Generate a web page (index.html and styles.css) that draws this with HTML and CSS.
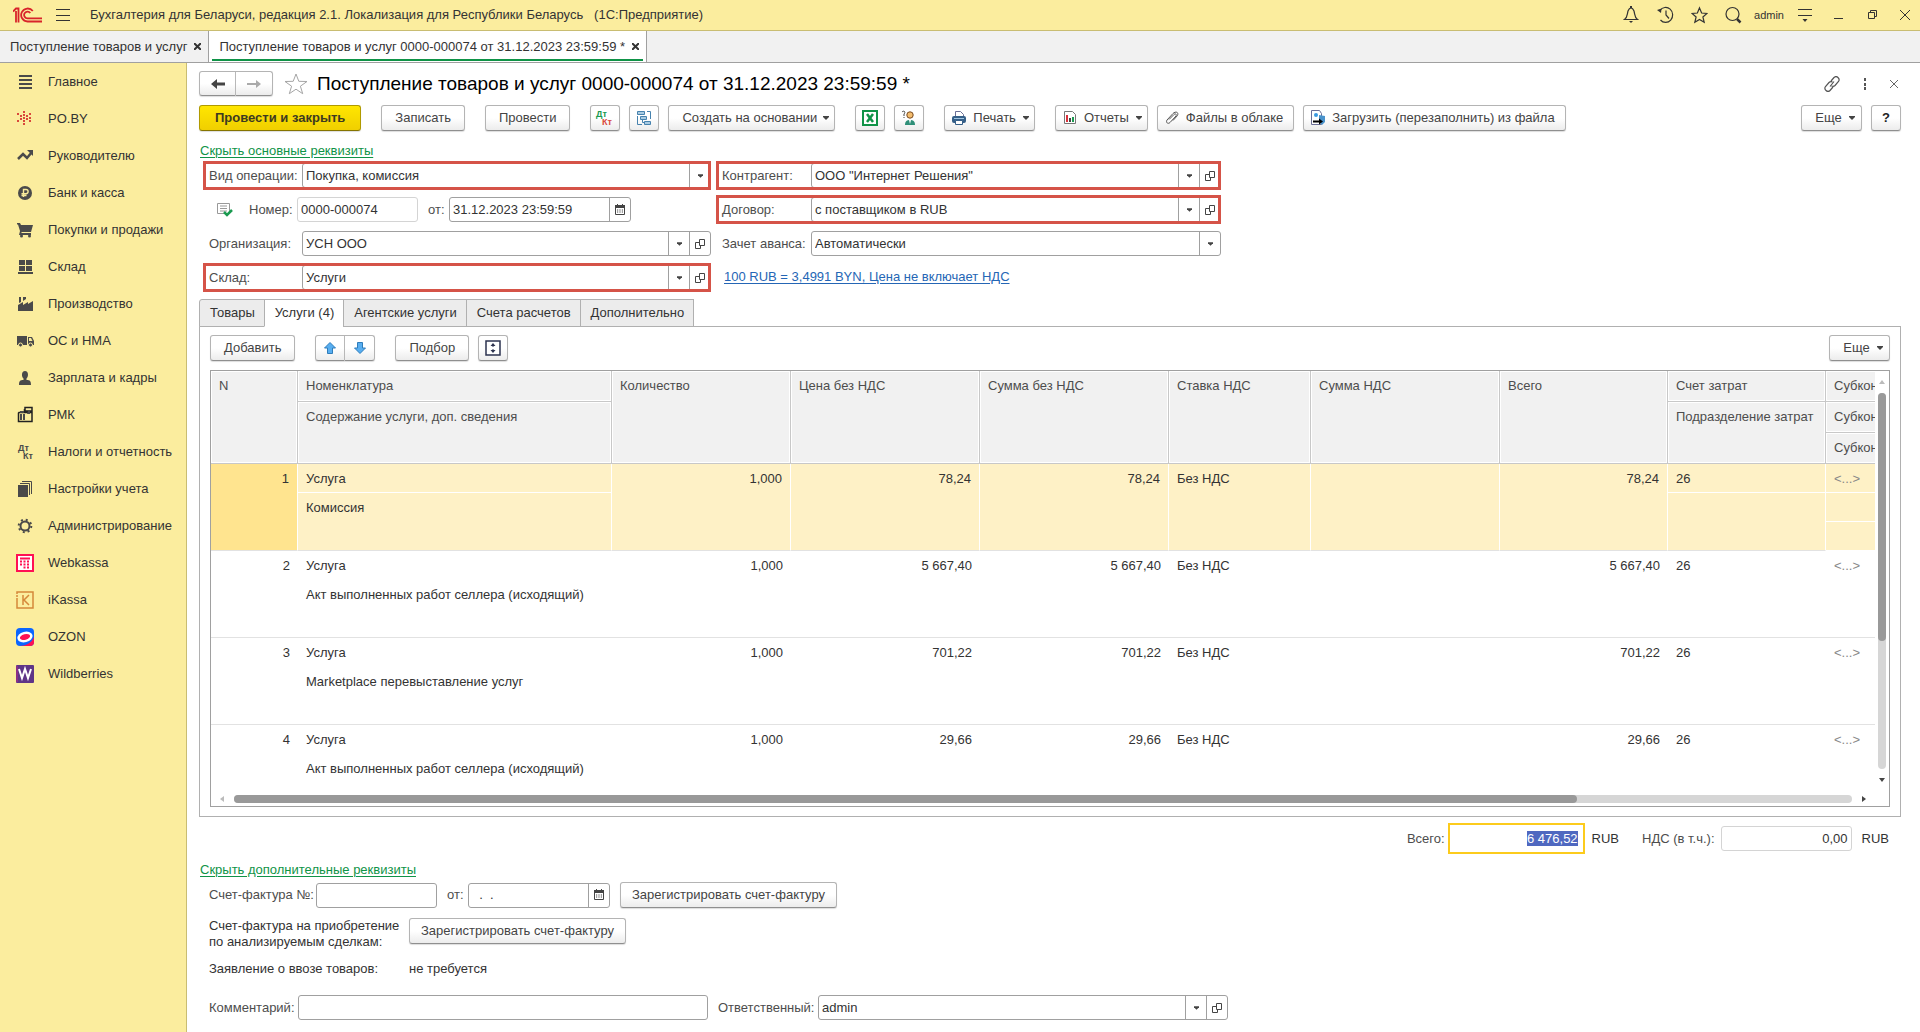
FILE: index.html
```html
<!DOCTYPE html>
<html lang="ru">
<head>
<meta charset="utf-8">
<title>Бухгалтерия для Беларуси</title>
<link rel="stylesheet" href="styles.css">
</head>
<body>
<svg class="defs" aria-hidden="true">
  <symbol id="i-open" viewBox="0 0 10 10"><path d="M4.500.5h5v6h-5zM4.500 3.500h-4v6h5v-3" fill="none" stroke="#444"/></symbol>
  <symbol id="i-down" viewBox="0 0 6 4"><path d="M0 0h6v1L3 4 0 1z" fill="#444"/></symbol>
  <symbol id="i-cal" viewBox="0 0 10 12"><path d="M.5 2.500h9v8h-9z" fill="none" stroke="#444"/><path d="M0 1h10v3H0zM2 0h1v2H2zM7 0h1v2H7z" fill="#444"/><path d="M2 6h6M2 8h6" stroke="#444" stroke-dasharray="1.200 1.200"/></symbol>
</svg>
<header class="topbar">
  <svg class="logo" width="29" height="17" viewBox="0 0 29 17" fill="none" stroke="#d8232a" stroke-width="1.800"><path d="M0 4.500l3-3h2.500v14M3 4v11.500M19.800 4A6.500 6.500 0 1 0 14.500 14.500H29M17.300 6A3.400 3.400 0 1 0 14.500 11.400H29"/></svg>
  <button class="icon-btn" aria-label="Меню"><svg width="14" height="14" viewBox="0 0 14 14"><path d="M0 1.500h14M0 7.500h14M0 12.500h14" stroke="#333"/></svg></button>
  <span class="app-name">Бухгалтерия для Беларуси, редакция 2.1. Локализация для Республики Беларусь &nbsp; (1С:Предприятие)</span>
  <nav class="top-tools">
    <button class="icon-btn" aria-label="Уведомления"><svg width="16" height="18" viewBox="0 0 16 18"><path d="M1.500 13.500h13c-3-2-2.500-5-3.500-8.500C10 2.500 9 2 8 2s-2 .5-3 3c-1 3.500-.5 6.500-3.500 8.500z" fill="none" stroke="#333" stroke-width="1.200"/><path d="M6 15h4l-2 2zM7 0h2v2H7z" fill="#333"/></svg></button>
    <button class="icon-btn" aria-label="История"><svg width="17" height="18" viewBox="0 0 17 18" fill="none" stroke="#333" stroke-width="1.200"><path d="M3 4.500A7 7.500 0 1 1 3.500 14M9 4.500V9l3 3.500"/><path d="M0 4l4 3 .5-4.500z" fill="#333" stroke="none"/></svg></button>
    <button class="icon-btn" aria-label="Избранное"><svg width="17" height="18" viewBox="0 0 24 24"><path d="M12 2l3 7.200 7.500.6-5.700 5 1.800 7.500L12 18.300l-6.600 4 1.800-7.500-5.700-5 7.500-.6z" fill="none" stroke="#333" stroke-width="1.700"/></svg></button>
    <button class="icon-btn" aria-label="Поиск"><svg width="17" height="18" viewBox="0 0 17 18"><circle cx="7.500" cy="8" r="6.500" fill="none" stroke="#333" stroke-width="1.200"/><path d="M12 13l3.500 3.500" stroke="#333" stroke-width="2.500"/></svg></button>
    <span class="user">admin</span>
    <button class="icon-btn" aria-label="Настройки"><svg width="14" height="14" viewBox="0 0 14 14"><path d="M0 1.500h14M0 7.500h14" stroke="#333"/><path d="M4.500 11h5L7 14z" fill="#333"/></svg></button>
    <button class="icon-btn" aria-label="Свернуть"><svg width="10" height="10" viewBox="0 0 10 10"><path d="M0 8.500h9" stroke="#333"/></svg></button>
    <button class="icon-btn" aria-label="Восстановить"><svg width="10" height="10" viewBox="0 0 10 10"><path d="M.5 2.500h6v6h-6zM2.500 2.500v-2h6v6h-2" fill="none" stroke="#333"/></svg></button>
    <button class="icon-btn close" aria-label="Закрыть"><svg width="10" height="10" viewBox="0 0 10 10"><path d="M0 0l10 10M10 0L0 10" stroke="#333"/></svg></button>
  </nav>
</header>
<nav class="windows">
  <a class="window" href="#list">Поступление товаров и услуг<svg width="7" height="7" viewBox="0 0 7 7"><path d="M0 0l7 7M7 0L0 7" stroke="#333" stroke-width="2"/></svg></a>
  <a class="window current" href="#doc">Поступление товаров и услуг 0000-000074 от 31.12.2023 23:59:59 *<svg width="7" height="7" viewBox="0 0 7 7"><path d="M0 0l7 7M7 0L0 7" stroke="#333" stroke-width="2"/></svg></a>
</nav>
<div class="body">
  <nav class="sidebar">
    <a href="#"><svg viewBox="0 0 24 24"><path d="M6 5h13v2H6zM6 9h13v2H6zM6 13h13v2H6zM6 17h13v2H6z"/></svg>Главное</a>
    <a href="#"><svg viewBox="0 0 24 24" fill="#d9493b"><path d="M10 4h2v2h-2zM10 7h2v2h-2zM10 10h2v2h-2zM10 13h2v2h-2zM10 16h2v2h-2zM7 8h2v2H7zM13 8h2v2h-2zM7 11h2v2H7zM13 11h2v2h-2zM4 6h2v2H4zM16 6h2v2h-2zM16 10h2v2h-2zM4 13h2v2H4zM16 13h2v2h-2z"/></svg>PO.BY</a>
    <a href="#"><svg viewBox="0 0 24 24"><path d="M5 15l5-5 4 4 5-6" fill="none" stroke="#4a4a4a" stroke-width="2.500"/><path d="M14 6h6v6z"/></svg>Руководителю</a>
    <a href="#"><svg viewBox="0 0 24 24"><circle cx="12" cy="12" r="7"/><path d="M10.500 16V8.500H13a2 2 0 0 1 0 4.200H8.500M8.500 14.500h5" fill="none" stroke="#f9eb9b" stroke-width="1.400"/></svg>Банк и касса</a>
    <a href="#"><svg viewBox="0 0 24 24"><path d="M4 5h3l1 2h12l-2 7H9l-1 1h10v2H6l1-4-2-6.500H4z"/><circle cx="8.500" cy="18" r="1.500"/><circle cx="16.500" cy="18" r="1.500"/></svg>Покупки и продажи</a>
    <a href="#"><svg viewBox="0 0 24 24"><path d="M6 5h6v5H6zM13 5h6v5h-6zM6 11h6v5H6zM13 11h6v5h-6zM5 17h15v2H5z"/></svg>Склад</a>
    <a href="#"><svg viewBox="0 0 24 24"><path d="M5 19v-6l5-3v3l5-3v2l5-3v10zM6 5h2v5l-2 1zM10 5h3v2l-3 2z"/></svg>Производство</a>
    <a href="#"><svg viewBox="0 0 24 24"><path d="M4 7h10v9H4zM15 8h4l2 4v4h-6z"/><path d="M16 9h2l1.500 3H16z" fill="#f9eb9b"/><g stroke="#f9eb9b"><circle cx="7.500" cy="16" r="2"/><circle cx="17.500" cy="16" r="2"/></g></svg>ОС и НМА</a>
    <a href="#"><svg viewBox="0 0 24 24"><path d="M12 5c4 0 3.500 6 1.500 7.500V14c3.500 0 4.500 1 4.500 5H6c0-4 1-5 4.500-5v-1.500C8.500 11 8 5 12 5z"/></svg>Зарплата и кадры</a>
    <a href="#"><svg viewBox="0 0 24 24"><path d="M6 9.500h13v9H5.500V10zM11.500 9V6M12 4.500h7V8h-7z" fill="none" stroke="#222" stroke-width="1.500"/><path d="M7 8h4v2H7zM7 11h2v6H7zM10 11h2v6h-2zM15 8h2v3h-3z"/></svg>РМК</a>
    <a href="#"><svg viewBox="0 0 24 24" class="dtkt"><text x="5" y="11">Дт</text><text x="10" y="19">Кт</text></svg>Налоги и отчетность</a>
    <a href="#"><svg viewBox="0 0 24 24"><path d="M5 8h10v12H5z"/><path d="M7 6.500h9.500V18M9 4.500h9.500V17" fill="none" stroke="#4a4a4a"/></svg>Настройки учета</a>
    <a href="#"><svg viewBox="0 0 24 24" fill="none" stroke="#4a4a4a"><circle cx="12" cy="12" r="4.500" stroke-width="2"/><circle cx="12" cy="12" r="6.300" stroke-width="2" stroke-dasharray="2 2.950"/></svg>Администрирование</a>
    <a href="#"><svg viewBox="0 0 24 24"><path d="M4 4h16v16H4z" fill="#fff" stroke="#ff1053" stroke-width="2"/><path d="M7 7.500h10M7 10.500h2m1.500 0h2m1.500 0h2M7 13.500h2m1.500 0h2m1.500 0h2m-5.500 3h2m1.500 0h2" stroke="#ff1053" stroke-width="2" fill="none"/></svg>Webkassa</a>
    <a href="#"><svg viewBox="0 0 24 24" fill="none" stroke="#d5883a" stroke-width="1.500"><path d="M4 6V4h16v16H4v-2M4 7v2M4 10v8M10 7v10M16 7l-5 5 5 5"/></svg>iKassa</a>
    <a href="#"><svg viewBox="0 0 24 24"><rect x="3" y="3" width="18" height="18" rx="4" fill="#0a66ff"/><path d="M21 12v5a4 4 0 0 1-4 4H7c5 0 12-3 14-9z" fill="#ff1053"/><ellipse cx="12" cy="12" rx="6.500" ry="4" transform="rotate(-15 12 12)" fill="#ff1053" stroke="#fff" stroke-width="2.500"/></svg>OZON</a>
    <a href="#"><svg viewBox="0 0 24 24"><rect x="3" y="3" width="18" height="18" rx="1" fill="#5f3587"/><path d="M3 4h2v16H3z" fill="#8b2f86"/><path d="M6 7l3 9 3-9 3 9 3-9" fill="none" stroke="#fff" stroke-width="2"/></svg>Wildberries</a>
  </nav>
  <main class="main">
    <div class="title-row">
      <div class="joined"><button class="btn nav-btn" aria-label="Назад"><svg width="14" height="10" viewBox="0 0 14 10"><path d="M0 5l6-5v3.500h8v3H6V10z" fill="#444"/></svg></button><button class="btn nav-btn" aria-label="Вперед"><svg width="14" height="10" viewBox="0 0 14 10"><path d="M14 5L9 1v3H0v2h9v3z" fill="#aaa"/></svg></button></div>
      <svg class="fav" width="24" height="22" viewBox="0 0 24 22"><path d="M12 1l2.800 7.300 8.200.2-6.600 4.700 2.300 7.500L12 16.200l-6.700 4.500 2.300-7.500L1 8.500l8.200-.2z" fill="none" stroke="#a5a5a5"/></svg>
      <h1>Поступление товаров и услуг 0000-000074 от 31.12.2023 23:59:59 *</h1>
      <div class="title-tools">
        <button class="icon-btn" aria-label="Ссылка"><svg width="16" height="16" viewBox="0 0 16 16" fill="none" stroke="#555" stroke-width="1.200"><path d="M7 5l3-3.500c2.500-2.500 6.500 1 4.500 4L11 9.500c-1 1-2.500 1-3.500.5M9 11l-3 3.500c-2.500 2.500-6.500-1-4.500-4L5 6.500c1-1 2.500-1 3.500-.5M6 10.500l4-5"/></svg></button>
        <button class="icon-btn" aria-label="Еще"><svg width="4" height="12" viewBox="0 0 4 12"><path d="M1 0h2v3H1zM1 5h2v3H1zM1 9h2v3H1z" fill="#555"/></svg></button>
        <button class="icon-btn" aria-label="Закрыть"><svg width="8" height="8" viewBox="0 0 8 8"><path d="M0 0l8 8M8 0L0 8" stroke="#666"/></svg></button>
      </div>
    </div>
    <div class="toolbar">
      <div class="group wide"><button class="btn primary">Провести и закрыть</button><button class="btn">Записать</button><button class="btn">Провести</button></div>
      <div class="group">
        <button class="btn sq" aria-label="Проводки"><svg width="20" height="20" viewBox="0 0 20 20" class="dtkt"><text x="1" y="9" fill="#1a9a50">Дт</text><text x="7" y="17" fill="#d9493b">Кт</text></svg></button>
        <button class="btn sq" aria-label="Структура"><svg width="16" height="16" viewBox="0 0 16 16" fill="#a9cbe2" stroke="#4682ae"><path d="M1.500 1.500h7v3h-7zM4.500 6.500h6v3h-6zM8.500 11.500h6v3h-6z"/><path d="M11 1.500h3.500V9M1.500 6v8.500H6M6.500 9.500v3H8" fill="none"/></svg></button>
        <button class="btn drop">Создать на основании<svg class="caret"><use href="#i-down"/></svg></button>
      </div>
      <div class="group">
        <button class="btn sq" aria-label="Excel"><svg width="16" height="16" viewBox="0 0 16 16"><path d="M1 1h14v14H1z" fill="#fff" stroke="#0f9347" stroke-width="2"/><path d="M5 4l6 8M11 4l-6 8" stroke="#0f9347" stroke-width="2.500"/></svg></button>
        <button class="btn sq" aria-label="Помощь"><svg width="16" height="16" viewBox="0 0 16 16"><circle cx="9" cy="5" r="3.200" fill="#f4bd6e" stroke="#7a4a20"/><path d="M4 15c0-4 2-5 5-5s5 1 5 5z" fill="#2f8f78"/><path d="M8 10h2l-1 4z" fill="#fff"/><path d="M1 2c2-2 4 0 2 2v2M3 7v1" fill="none" stroke="#444"/></svg></button>
      </div>
      <div class="group"><button class="btn with-icon drop"><svg width="14" height="16" viewBox="1 0 14 16"><path d="M4.500 6V1.500h5l3 3V6" fill="#fff" stroke="#6b6f96"/><rect x="1" y="6" width="14" height="7" rx="2" fill="#355f88"/><path d="M3 8h10v1H3z" fill="#9fc4e0"/><path d="M4.500 10.500h7v4h-7z" fill="#fff" stroke="#355f88"/></svg>Печать<svg class="caret"><use href="#i-down"/></svg></button></div>
      <div class="group">
        <button class="btn with-icon drop"><svg width="14" height="16" viewBox="0 0 14 16"><path d="M1.500 1.500h8l3 3v9h-11z" fill="#fff" stroke="#777"/><path d="M3 5h2v7H3z" fill="#d9303b"/><path d="M6 8h2v4H6z" fill="#444"/><path d="M9 7h2v5H9z" fill="#1a9a50"/></svg>Отчеты<svg class="caret"><use href="#i-down"/></svg></button>
        <button class="btn with-icon"><svg width="14" height="14" viewBox="0 0 14 14"><path d="M4 8.500l5-5c1.500-1.500 3 0 2 1.500l-6 6.500c-2 2-4.500 0-3-2.500l6-6.500C10.500 0 14 1 12.500 4.500L8 9.500" fill="none" stroke="#555"/></svg>Файлы в облаке</button>
        <button class="btn with-icon"><svg width="14" height="16" viewBox="1 0 14 16"><path d="M1.500.5h8l2 3v11h-10z" fill="#fff" stroke="#6b6f96"/><circle cx="6" cy="5" r="2" fill="#3a9ae0"/><path d="M9 5l6 1v6l-3 3-3-3z" fill="#4a93cc"/><path d="M3 11.500h7" stroke="#000" stroke-width="2"/><path d="M9 8.500l4 3-4 3z"/></svg>Загрузить (перезаполнить) из файла</button>
      </div>
      <div class="group end"><button class="btn more">Еще<svg class="caret"><use href="#i-down"/></svg></button><button class="btn sq help">?</button></div>
    </div>
    <a class="toggle" href="#">Скрыть основные реквизиты</a>
    <div class="form">
      <div class="col-left">
        <div class="field marked"><label for="op">Вид операции:</label><div class="combo"><select id="op"><option>Покупка, комиссия</option></select><span class="cell"><svg class="caret"><use href="#i-down"/></svg></span></div></div>
        <div class="field number">
          <svg class="posted" width="16" height="14" viewBox="0 0 16 14"><path d="M.5.5h12v10H.5z" fill="#fff" stroke="#999"/><path d="M3 3h7M3 5.500h7M3 8h7" stroke="#999"/><path d="M7 9l3 3 5-5" fill="none" stroke="#1a9a50" stroke-width="2.500"/></svg>
          <label for="num">Номер:</label><input id="num" class="box pale" value="0000-000074" readonly>
          <label for="date">от:</label><div class="combo date"><input id="date" value="31.12.2023 23:59:59"><button class="cell" aria-label="Календарь"><svg class="cal"><use href="#i-cal"/></svg></button></div>
        </div>
        <div class="field"><label for="org">Организация:</label><div class="combo"><select id="org"><option>УСН ООО</option></select><span class="cell"><svg class="caret"><use href="#i-down"/></svg></span><button class="cell" aria-label="Открыть"><svg class="open"><use href="#i-open"/></svg></button></div></div>
        <div class="field marked"><label for="wh">Склад:</label><div class="combo"><select id="wh"><option>Услуги</option></select><span class="cell"><svg class="caret"><use href="#i-down"/></svg></span><button class="cell" aria-label="Открыть"><svg class="open"><use href="#i-open"/></svg></button></div></div>
      </div>
      <div class="col-right">
        <div class="field marked"><label for="agent">Контрагент:</label><div class="combo"><select id="agent"><option>ООО "Интернет Решения"</option></select><span class="cell"><svg class="caret"><use href="#i-down"/></svg></span><button class="cell" aria-label="Открыть"><svg class="open"><use href="#i-open"/></svg></button></div></div>
        <div class="field marked"><label for="contract">Договор:</label><div class="combo"><select id="contract"><option>с поставщиком в RUB</option></select><span class="cell"><svg class="caret"><use href="#i-down"/></svg></span><button class="cell" aria-label="Открыть"><svg class="open"><use href="#i-open"/></svg></button></div></div>
        <div class="field"><label for="advance">Зачет аванса:</label><div class="combo"><select id="advance"><option>Автоматически</option></select><span class="cell"><svg class="caret"><use href="#i-down"/></svg></span></div></div>
        <a class="rate" href="#">100 RUB = 3,4991 BYN, Цена не включает НДС</a>
      </div>
    </div>
    <div class="tabs" role="tablist">
      <button role="tab">Товары</button><button role="tab" class="active" aria-selected="true">Услуги (4)</button><button role="tab">Агентские услуги</button><button role="tab">Счета расчетов</button><button role="tab">Дополнительно</button>
    </div>
    <section class="panel">
      <div class="toolbar">
        <div class="group"><button class="btn">Добавить</button></div>
        <div class="group joined"><button class="btn sq" aria-label="Вверх"><svg width="12" height="12" viewBox="0 0 12 12"><path d="M6 .5L11.500 6h-3v5.500h-5V6h-3z" fill="#58aef0" stroke="#2e7dbb"/></svg></button><button class="btn sq" aria-label="Вниз"><svg width="12" height="12" viewBox="0 0 12 12"><path d="M6 11.500L.5 6h3V.5h5V6h3z" fill="#58aef0" stroke="#2e7dbb"/></svg></button></div>
        <div class="group"><button class="btn">Подбор</button><button class="btn sq" aria-label="Высота строк"><svg width="16" height="16" viewBox="0 0 16 16"><path d="M1 1h14v14H1z" fill="#fff" stroke="#2d3350" stroke-width="1.500"/><path d="M8 4v3M8 9v3" stroke="#2d3350"/><path d="M5.500 6L8 3l2.500 3zM5.500 10L8 13l2.500-3z" fill="#2d3350"/></svg></button></div>
        <div class="group end"><button class="btn more">Еще<svg class="caret"><use href="#i-down"/></svg></button></div>
      </div>
      <div class="grid">
        <div class="viewport">
          <table>
            <colgroup><col class="c-n"><col class="c-name"><col class="c-qty"><col class="c-sum"><col class="c-sum"><col class="c-rate"><col class="c-sum"><col class="c-total"><col class="c-acc"><col class="c-sub"></colgroup>
            <thead>
              <tr><th rowspan="3">N</th><th>Номенклатура</th><th rowspan="3">Количество</th><th rowspan="3">Цена без НДС</th><th rowspan="3">Сумма без НДС</th><th rowspan="3">Ставка НДС</th><th rowspan="3">Сумма НДС</th><th rowspan="3">Всего</th><th>Счет затрат</th><th>Субконто 1</th></tr>
              <tr><th rowspan="2">Содержание услуги, доп. сведения</th><th rowspan="2">Подразделение затрат</th><th>Субконто 2</th></tr>
              <tr><th>Субконто 3</th></tr>
            </thead>
            <tbody class="selected">
              <tr><td rowspan="3" class="num first">1</td><td>Услуга</td><td rowspan="3" class="num">1,000</td><td rowspan="3" class="num">78,24</td><td rowspan="3" class="num">78,24</td><td rowspan="3">Без НДС</td><td rowspan="3"></td><td rowspan="3" class="num">78,24</td><td>26</td><td class="dim">&lt;...&gt;</td></tr>
              <tr><td rowspan="2">Комиссия</td><td rowspan="2"></td><td></td></tr><tr><td></td></tr>
            </tbody>
            <tbody>
              <tr><td rowspan="3" class="num">2</td><td>Услуга</td><td rowspan="3" class="num">1,000</td><td rowspan="3" class="num">5 667,40</td><td rowspan="3" class="num">5 667,40</td><td rowspan="3">Без НДС</td><td rowspan="3"></td><td rowspan="3" class="num">5 667,40</td><td>26</td><td class="dim">&lt;...&gt;</td></tr>
              <tr><td rowspan="2">Акт выполненных работ селлера (исходящий)</td><td rowspan="2"></td><td></td></tr><tr><td></td></tr>
            </tbody>
            <tbody>
              <tr><td rowspan="3" class="num">3</td><td>Услуга</td><td rowspan="3" class="num">1,000</td><td rowspan="3" class="num">701,22</td><td rowspan="3" class="num">701,22</td><td rowspan="3">Без НДС</td><td rowspan="3"></td><td rowspan="3" class="num">701,22</td><td>26</td><td class="dim">&lt;...&gt;</td></tr>
              <tr><td rowspan="2">Marketplace перевыставление услуг</td><td rowspan="2"></td><td></td></tr><tr><td></td></tr>
            </tbody>
            <tbody>
              <tr><td rowspan="3" class="num">4</td><td>Услуга</td><td rowspan="3" class="num">1,000</td><td rowspan="3" class="num">29,66</td><td rowspan="3" class="num">29,66</td><td rowspan="3">Без НДС</td><td rowspan="3"></td><td rowspan="3" class="num">29,66</td><td>26</td><td class="dim">&lt;...&gt;</td></tr>
              <tr><td rowspan="2">Акт выполненных работ селлера (исходящий)</td><td rowspan="2"></td><td></td></tr><tr><td></td></tr>
            </tbody>
          </table>
        </div>
        <div class="vscroll"><svg width="6" height="4" viewBox="0 0 6 4"><path d="M0 4l3-4 3 4z" fill="#bbb"/></svg><div class="track"><div class="thumb"></div></div><svg width="6" height="4" viewBox="0 0 6 4"><path d="M0 0l3 4 3-4z" fill="#444"/></svg></div>
        <div class="hscroll"><svg width="4" height="6" viewBox="0 0 4 6"><path d="M4 0L0 3l4 3z" fill="#bbb"/></svg><div class="track"><div class="thumb"></div></div><svg width="4" height="6" viewBox="0 0 4 6"><path d="M0 0l4 3-4 3z" fill="#444"/></svg></div>
      </div>
    </section>
    <div class="totals">
      <label for="total">Всего:</label><input id="total" class="total" value="6 476,52"><span class="cur">RUB</span>
      <label for="vat">НДС (в т.ч.):</label><input id="vat" class="box pale vat" value="0,00" readonly><span class="cur">RUB</span>
    </div>
    <a class="toggle second" href="#">Скрыть дополнительные реквизиты</a>
    <div class="extra">
      <div class="field invoice"><label class="l-inv" for="inv">Счет-фактура №:</label><input id="inv" class="box"><label class="l-date" for="invdate">от:</label><div class="combo date"><input id="invdate" value="  .  ."><button class="cell" aria-label="Календарь"><svg class="cal"><use href="#i-cal"/></svg></button></div><button class="btn register">Зарегистрировать счет-фактуру</button></div>
      <div class="field two-line"><span class="wide-label">Счет-фактура на приобретение<br>по анализируемым сделкам:</span><button class="btn register">Зарегистрировать счет-фактуру</button></div>
      <div class="field import"><span class="wide-label">Заявление о ввозе товаров:</span><span>не требуется</span></div>
      <div class="field comment"><label class="l-comment" for="comment">Комментарий:</label><input id="comment" class="box"><label class="l-resp" for="resp">Ответственный:</label><div class="combo"><select id="resp"><option>admin</option></select><span class="cell"><svg class="caret"><use href="#i-down"/></svg></span><button class="cell" aria-label="Открыть"><svg class="open"><use href="#i-open"/></svg></button></div></div>
    </div>
  </main>
</div>
<script src="app.js"></script>
</body>
</html>
```
FILE: app.js
```js
document.getElementById('total').select();
```
FILE: styles.css
```css
* { box-sizing: border-box; }
body {
  margin: 0;
  display: flex;
  flex-direction: column;
  height: 100vh;
  min-height: 960px;
  font: 13px/16px "Liberation Sans", Arial, sans-serif;
  color: #333;
  background: #fff;
}
button, input, select { font: inherit; color: inherit; margin: 0; }
svg { flex: none; }
.defs { position: absolute; width: 0; height: 0; }
.icon-btn {
  display: flex; align-items: center; justify-content: center;
  border: 0; background: none; padding: 0;
}

.topbar {
  display: flex; align-items: center;
  height: 31px; flex: none;
  padding: 0 0 0 13px;
  background: #fbed9e;
  border-bottom: 1px solid #c9bd72;
}
.topbar .logo { margin-right: 14px; }
.app-name { margin-left: 20px; }
.top-tools { margin-left: auto; display: flex; align-items: center; }
.top-tools .icon-btn { width: 34px; height: 30px; }
.top-tools .close { width: 30px; }
.user { font-size: 11px; width: 38px; text-align: center; }

.windows {
  display: flex; flex: none;
  height: 32px;
  background: #f1f1f1;
  border-bottom: 1px solid #a0a0a0;
}
.window {
  display: flex; align-items: center; gap: 7px;
  padding: 0 7px 0 10px;
  color: inherit; text-decoration: none;
  border-right: 1px solid #a0a0a0;
}
.window.current { background: linear-gradient(#0f9347, #0f9347) 3px 28px / calc(100% - 6px) 2px no-repeat #fff; }

.body { display: flex; flex: 1; min-height: 0; }
.sidebar {
  width: 187px; flex: none;
  background: #fbed9e;
  border-right: 1px solid #c9bd72;
}
.sidebar a {
  display: flex; align-items: center; gap: 11px;
  height: 37px; padding-left: 13px;
  color: #333; text-decoration: none; white-space: nowrap;
}
.sidebar svg { width: 24px; height: 24px; }
.sidebar svg:not([fill]) { fill: #4a4a4a; }
.dtkt { font-size: 9px; font-weight: bold; }

.main {
  flex: 1; min-width: 0;
  display: flex; flex-direction: column;
  padding: 8px 19px 12px 12px;
}
.title-row { display: flex; align-items: center; height: 25px; flex: none; }
h1 { margin: 0; font-size: 19px; line-height: 24px; font-weight: normal; color: #000; white-space: nowrap; }
.fav { margin: 0 9px 0 11px; }
.title-tools { margin-left: auto; display: flex; align-items: center; gap: 23px; padding-right: 3px; }

.btn {
  display: flex; align-items: center; justify-content: center;
  height: 26px; padding: 0 13px;
  border: 1px solid #b4b4b4; border-bottom-color: #8f8f8f; border-radius: 3px;
  background: linear-gradient(#fff 50%, #ececec);
  box-shadow: 0 1px 1px #ddd;
  color: #444; white-space: nowrap;
}
.caret { width: 5px; height: 4px; }
.btn .caret { width: 6px; }
.btn.sq { width: 30px; padding: 0; }
.btn.nav-btn { width: 37px; height: 25px; padding: 0; }
.btn.primary {
  padding: 0 15px;
  font-weight: bold; color: #3d3a20;
  background: linear-gradient(#ffe600, #f0cf00);
  border-color: #b09a00; border-bottom-color: #857400;
}
.btn.drop { gap: 6px; padding-right: 5px; }
.btn.with-icon { gap: 7px; padding-left: 7px; }
.btn.with-icon:not(.drop) { padding-right: 10px; }
.btn.more { width: 61px; gap: 7px; padding: 0 0 0 7px; }
.btn.help { font-weight: bold; color: #222; }
.btn.register { padding: 0 11px; }
.joined { display: flex; }
.toolbar .joined { gap: 0; }
.joined .btn:first-child { border-radius: 3px 0 0 3px; }
.joined .btn:last-child { border-radius: 0 3px 3px 0; border-left: 0; }

.toolbar { display: flex; gap: 20px; flex: none; }
.main > .toolbar { margin-top: 9px; }
.group { display: flex; gap: 9px; }
.group.wide { gap: 20px; }
.group.end { margin-left: auto; }

a.toggle { align-self: flex-start; margin: 12px 0 4px 1px; color: #0f9347; text-underline-offset: 2px; }
a.toggle.second { margin-top: 8px; }

.form { display: flex; gap: 11px; padding-left: 10px; flex: none; }
.col-left, .col-right { display: flex; flex-direction: column; gap: 9px; }
.col-left { width: 502px; }
.col-right { width: 499px; }
.field { display: flex; align-items: center; height: 25px; position: relative; }
.field label { color: #4d4d4d; white-space: nowrap; }
.col-left .field > label { width: 93px; }
.col-right .field > label { width: 89px; }
.col-left .number > label { width: auto; }
.marked::after {
  content: ""; position: absolute; inset: -2px 0 -2px -6px;
  border: 3px solid #d55348; pointer-events: none;
}
.rate { padding-left: 2px; color: #2566b5; line-height: 24px; text-underline-offset: 2px; }

.combo {
  display: flex; flex: 1; min-width: 0;
  height: 25px;
  border: 1px solid #a0a0a0; border-radius: 3px;
  background: #fff;
}
.combo select, .combo input {
  flex: 1; min-width: 0; padding: 0 3px;
  border: 0; outline: 0; background: none; appearance: none;
}
.cell {
  display: flex; align-items: center; justify-content: center;
  width: 21px; padding: 0;
  border: 0; border-left: 1px solid #a0a0a0; background: none;
}
.open { width: 10px; height: 10px; }
.cal { width: 10px; height: 12px; }
.box { height: 25px; padding: 0 3px; border: 1px solid #a0a0a0; border-radius: 3px; background: #fff; }
.box.pale { border-color: #d4d4d4; }
.number .posted { margin: 0 16px 0 8px; }
.number .box { width: 121px; margin: 0 10px 0 auto; }
.combo.date { flex: none; width: 182px; margin: 0 80px 0 auto; }

.tabs { display: flex; margin-top: 9px; flex: none; position: relative; z-index: 1; }
.tabs button {
  height: 28px; padding: 0 9px 0 10px; margin: 0 0 -1px -1px;
  border: 1px solid #b0b0b0; background: #ececec;
}
.tabs button:first-child { margin-left: 0; border-radius: 3px 0 0 0; }
.tabs .active { background: #fff; border-bottom-color: #fff; }

.panel {
  flex: 1; min-height: 0;
  display: flex; flex-direction: column; gap: 9px;
  padding: 8px 10px 9px;
  border: 1px solid #b0b0b0;
}
.grid {
  flex: 1; min-height: 0;
  display: grid; grid-template: 1fr 14px / 1fr 14px;
  border: 1px solid #a0a0a0;
}
.viewport { overflow: hidden; min-width: 0; min-height: 0; }
table { table-layout: fixed; width: 1740px; min-width: 100%; border-collapse: separate; border-spacing: 0; }
.c-n { width: 87px; } .c-name { width: 314px; } .c-qty { width: 179px; } .c-sum { width: 189px; }
.c-rate { width: 142px; } .c-total { width: 168px; } .c-acc { width: 158px; } .c-sub { width: 125px; }
th, td { padding: 7px 8px 5px; text-align: left; vertical-align: top; font-weight: normal; white-space: nowrap; overflow: hidden; }
thead tr { height: 31px; }
th {
  color: #4d4d4d; background: #f1f1f1;
  border-right: 1px solid #c8c8c8; border-bottom: 1px solid #c8c8c8;
  box-shadow: inset 0 0 0 1px #fff;
}
tbody tr { height: 29px; }
tbody td[rowspan="3"], tbody tr:nth-child(2) td[rowspan="2"], tbody tr:last-child td { border-bottom: 1px solid #e2e2e2; }
.selected td { background: #fef1c6; border-right: 1px solid #fff; }
.selected td:not([rowspan]) { border-bottom: 1px solid #fff; }
.selected .first { background: #ffe48f; }
.num { text-align: right; }
.dim { color: #888; }
.vscroll, .hscroll { display: flex; align-items: center; justify-content: space-between; }
.vscroll { flex-direction: column; padding: 9px 0 10px 0; }
.track { background: #d6d6d6; border-radius: 4px; }
.vscroll .track { width: 8px; flex: 1; margin: 9px 0; }
.vscroll .thumb { height: 66%; }
.hscroll { padding: 0 9px; }
.hscroll .track { height: 8px; flex: 1; margin: 0 10px; }
.hscroll .thumb { width: 83%; height: 8px; }
.thumb { background: #999; border-radius: 4px; }

.totals { display: flex; align-items: center; justify-content: flex-end; margin-top: 6px; height: 31px; flex: none; padding-right: 12px; color: #4d4d4d; }
.totals input { text-align: right; color: #333; }
.total { width: 137px; height: 31px; margin: 0 7px 0 3px; padding: 0 5px; border: 2px solid #fccb1c; outline: 0; }
.total::selection { background: #4f68c0; color: #fff; }
.totals .cur { color: #333; }
.total + .cur { margin-right: 23px; }
.vat { width: 131px; margin: 0 10px 0 6px; }

.extra { padding-left: 10px; flex: none; }
.l-inv { width: 107px; }
.l-date { width: 21px; }
.l-comment { width: 89px; }
.l-resp { width: 100px; }
.invoice { height: 26px; }
.invoice .box { width: 121px; margin-right: 10px; }
.invoice .combo.date { width: 142px; margin: 0 10px 0 0; }
.two-line { height: 33px; margin-top: 10px; align-items: flex-start; }
.import { height: 16px; margin-top: 10px; }
.wide-label { width: 200px; white-space: nowrap; }
.comment { margin-top: 18px; }
.comment .box { width: 410px; margin-right: 10px; }
.comment .combo { flex: none; width: 410px; }
```
